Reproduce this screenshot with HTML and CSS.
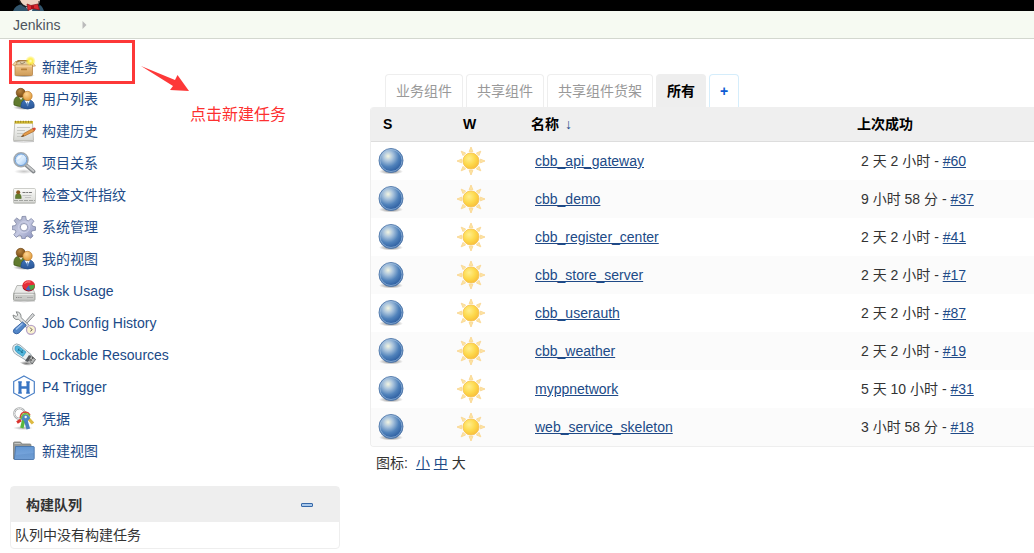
FILE: index.html
```html
<!DOCTYPE html>
<html lang="zh-CN">
<head>
<meta charset="utf-8">
<title>Jenkins</title>
<link rel="stylesheet" href="styles.css">
</head>
<body>
<svg class="sprite" aria-hidden="true">
  <defs>
    <radialGradient id="g-ball" cx=".38" cy=".32" r=".68"><stop offset="0" stop-color="#f3f5e2"/><stop offset=".3" stop-color="#a9c3dc"/><stop offset=".65" stop-color="#5082bb"/><stop offset="1" stop-color="#2b5c9f"/></radialGradient>
    <radialGradient id="g-sun" cx=".38" cy=".35" r=".7"><stop offset="0" stop-color="#ffee8c"/><stop offset=".55" stop-color="#fdd94c"/><stop offset="1" stop-color="#f8bd38"/></radialGradient>
    <radialGradient id="g-shadow"><stop offset="0" stop-color="#000" stop-opacity=".55"/><stop offset="1" stop-color="#000" stop-opacity="0"/></radialGradient>
    <radialGradient id="g-glow"><stop offset="0" stop-color="#fffbd0"/><stop offset=".4" stop-color="#fff04a"/><stop offset="1" stop-color="#ffe820" stop-opacity="0"/></radialGradient>
    <radialGradient id="g-brown" cx=".4" cy=".3" r=".8"><stop offset="0" stop-color="#b98540"/><stop offset="1" stop-color="#6b410d"/></radialGradient>
    <radialGradient id="g-gold" cx=".4" cy=".3" r=".8"><stop offset="0" stop-color="#ffd795"/><stop offset="1" stop-color="#d9902c"/></radialGradient>
    <linearGradient id="g-blue" x2="0" y2="1"><stop offset="0" stop-color="#3f74b8"/><stop offset="1" stop-color="#2a5596"/></linearGradient>
    <linearGradient id="g-box" x2="0" y2="1"><stop offset="0" stop-color="#edc488"/><stop offset="1" stop-color="#cf9c58"/></linearGradient>
    <linearGradient id="g-paper" x2="0" y2="1"><stop offset="0" stop-color="#fdfdfb"/><stop offset="1" stop-color="#d5d6d2"/></linearGradient>
    <linearGradient id="g-folder" x2="0" y2="1"><stop offset="0" stop-color="#6497d2"/><stop offset="1" stop-color="#80ace0"/></linearGradient>
    <linearGradient id="g-lens" x2="1" y2="1"><stop offset="0" stop-color="#9fc8f4"/><stop offset=".5" stop-color="#ddeefe"/><stop offset="1" stop-color="#8dbcf0"/></linearGradient>
    <linearGradient id="g-gear" x2="1" y2="1"><stop offset="0" stop-color="#a1a6bf"/><stop offset=".5" stop-color="#c5c9e2"/><stop offset="1" stop-color="#828bb8"/></linearGradient>
  </defs>
  <symbol id="i-box" viewBox="0 0 24 24">
    <ellipse cx="12" cy="20.500" rx="11" ry="2" fill="url(#g-shadow)"/>
    <path d="M4 6.500 6 5h12l1.500 1.500v4H4z" fill="#a87a40"/><path d="M5 7.500c4-2 9-1.500 13 0v3H5z" fill="#dccba9"/><path d="M8 7.500l2 1.500 3-2" fill="none" stroke="#8d7350" stroke-width=".8"/>
    <path d="M4 6 .5 10l3 1L5 9zM19.500 6l4 5-3.500.5-1.500-3z" fill="#f1d3a3" stroke="#c18c4b" stroke-width=".6"/>
    <path d="M3 10h17.500V19.500q0 1-1 1H4q-1 0-1-1z" fill="url(#g-box)" stroke="#b78445" stroke-width=".8"/>
    <path d="M3.500 11H20" stroke="#f9e0b8"/><rect x="9" y="13.500" width="6" height="1.800" rx=".5" fill="#b57d36"/>
    <circle cx="18.500" cy="6" r="5.200" fill="url(#g-glow)"/>
  </symbol>
  <symbol id="i-users" viewBox="0 0 24 24">
    <ellipse cx="12" cy="20.500" rx="11" ry="2.500" fill="url(#g-shadow)"/>
    <path d="M2 18q-1-7 3.500-8.500h6Q15 11 14 18q-6 3-12 0z" fill="#617b2e" stroke="#3f571a" stroke-width=".7"/>
    <path d="M6.500 9.500 9 13l2-3z" fill="#edf1d8"/>
    <circle cx="8.700" cy="5.800" r="4.500" fill="url(#g-brown)" stroke="#663d0b" stroke-width=".6"/>
    <path d="M9 20.500q-.5-6.500 4-7.500h4.500q5.500 1 4.500 7.500-6 3-13 0z" fill="url(#g-blue)" stroke="#214b87" stroke-width=".7"/>
    <path d="m12.500 13.500 3.200 4.500 2.300-4.500z" fill="#f6f7fb"/><path d="m15.200 15-.6 3 1 1.500 1-1.500-.7-3z" fill="#6c92c8"/>
    <circle cx="15.500" cy="9" r="4.700" fill="url(#g-gold)" stroke="#b77222" stroke-width=".6"/>
  </symbol>
  <symbol id="i-note" viewBox="0 0 24 24">
    <path d="M1.500 22.500q10 1 20.500 0" stroke="#c2c2c2" fill="none"/>
    <path d="M2.800 4H20.500L21.500 21.500h-20z" fill="url(#g-paper)" stroke="#b2b3ac" stroke-width=".8"/>
    <path d="M2.500 2h18.500v2.600H2.500z" fill="#d5bd35"/><path d="M3 2.700h18" stroke="#99831f" stroke-width="2" stroke-dasharray="1 1.600"/>
    <path d="M5 8.500h13M5 11.500h8M5 14.500h6M5 17.500h7" stroke="#c2c4bf" stroke-width=".9"/>
    <path d="m9.500 17.500 2.300-3L21 9.300l2 1-.8 1.900-9.500 4.700z" fill="#e59b48" stroke="#9c6227" stroke-width=".6"/>
    <path d="m20.200 9.600 2-1q1.800.2 1.600 1.700l-2 1.500z" fill="#d64f38"/><path d="m8.800 18 2.700-1.800.7.800z" fill="#302820"/>
  </symbol>
  <symbol id="i-search" viewBox="0 0 24 24">
    <ellipse cx="12" cy="20.500" rx="10" ry="2.500" fill="url(#g-shadow)" opacity=".4"/>
    <path d="m14.500 14.500 7 6" stroke="#85898c" stroke-width="3.800" stroke-linecap="round"/><path d="m15 14.500 6.500 5.500" stroke="#c7c9ca" stroke-width="1.800" stroke-linecap="round"/>
    <circle cx="9" cy="8.700" r="7" fill="url(#g-lens)" stroke="#a3a9ae" stroke-width="1.500"/><circle cx="9" cy="8.700" r="5.800" fill="none" stroke="#5b91cf" stroke-width=".8"/>
    <path d="M4.500 9Q5 4.500 10 4q-1 3.500-5.500 5z" fill="#fff" opacity=".75"/>
  </symbol>
  <symbol id="i-card" viewBox="0 0 24 24">
    <rect x="1.500" y="5.500" width="22" height="15" rx="1.200" fill="url(#g-paper)" stroke="#c0c2bd" stroke-width=".8"/>
    <path d="M2 17.500h21" stroke="#a2a4a0" stroke-dasharray="4 1"/><path d="M2 19.500h21" stroke="#c2c3bf"/>
    <path d="M3.500 15.500q-.5-5 2.700-5t3 5z" fill="#637e2e" stroke="#455e1c" stroke-width=".5"/><circle cx="6.200" cy="9.300" r="2" fill="#8e5b1f"/>
    <path d="M10.500 9.500H20" stroke="#777" stroke-dasharray="3 .7 2 .7"/><path d="M10.500 12.500h9M13 14.500h6" stroke="#bbb" stroke-width=".8"/>
  </symbol>
  <symbol id="i-gear" viewBox="0 0 24 24">
    <ellipse cx="12" cy="21" rx="10" ry="2" fill="url(#g-shadow)" opacity=".5"/>
    <path fill-rule="evenodd" d="m10 1.500 3.700-.2.600 3.700 2 .8 3-2.300 2.600 2.700-2.200 3 .8 2 3 .6v3.500l-3.600.6-.8 2 2 3-2.500 2.300-3-2.200-2 .8-.6 2.200H10l-.7-3-2-.8-3 2.200-2.500-2.700L4 17l-.8-2-3-.5V11l3.300-.5.800-2-2.200-3 2.600-2.500 3 2.200 2-.8zM12 8.500a3.700 3.700 0 1 0 0 7.400 3.700 3.700 0 0 0 0-7.400z" fill="url(#g-gear)" stroke="#7f86a4" stroke-width=".8" stroke-linejoin="round"/>
    <circle cx="12" cy="12.200" r="5.500" fill="none" stroke="#d0d4ea" stroke-width=".8"/>
  </symbol>
  <symbol id="i-disk" viewBox="0 0 24 24">
    <path d="M1 22q11 1.500 22 0" fill="none" stroke="#ccc"/>
    <path d="M5 6.500h14.500L23 14.500H1.500z" fill="#e9eae8" stroke="#aaaba7" stroke-width=".8"/><rect x="1.500" y="14.300" width="21.500" height="7" rx="1" fill="#c9cac7" stroke="#92948f" stroke-width=".8"/>
    <path d="M3 15.200h18.500" stroke="#f5f5f4"/><path d="M4 18.500h6" stroke="#888" stroke-dasharray="1 .8"/><path d="M15 18.500h6" stroke="#aaa"/>
    <ellipse cx="16.700" cy="7.500" rx="6.200" ry="5" fill="#9d1624"/><ellipse cx="16.700" cy="6.300" rx="6.200" ry="5" fill="#e52d38"/>
    <path d="m16.700 6.500 6-.7q.5 4-4 5.500z" fill="#49a943"/><path d="m16.700 6.500 2 4.800q-3 .7-5-1z" fill="#4265ba"/><path d="M12.500 4.500q2-2.500 6-1.500" stroke="#ff8c83" fill="none"/>
  </symbol>
  <symbol id="i-tools" viewBox="0 0 24 24">
    <path d="m13 11 7.500-8.500 2 1.600-7.800 8.500z" fill="#d8dadb" stroke="#73777b" stroke-width=".8"/>
    <path d="M4.200.8 5.700 4 4.300 5.500 1 4Q1 7.500 4 8.500l2.700-.2L19 21.500l3-2.500L9 6.500Q9.500 1 4.200.8z" fill="#e2e4e3" stroke="#7e8282" stroke-width=".9"/>
    <path d="m10.500 11 3.700 3.200-7.500 8q-2.700 1.300-4.500-.2t0-4z" fill="#5387c8" stroke="#2d599b" stroke-width=".9"/><path d="m4 18.500 6.500-6" stroke="#9fc2ee" stroke-width="1.500"/>
    <circle cx="19" cy="18.800" r="4.500" fill="#faf3cf" stroke="#b9a5c8" stroke-width="1.300"/><path d="m18 16.500 2.200 2.300-1.900 1.500" fill="none" stroke="#6c615b"/>
  </symbol>
  <symbol id="i-usb" viewBox="0 0 24 24">
    <path d="M6 18q9 7 17 4l-4-4z" fill="url(#g-shadow)"/>
    <path d="m15 15 3-3.500 5.500 5-3.300 4.500z" fill="#b4b6b5" stroke="#505356" stroke-width=".8"/><path d="m18.500 16.500 1 1m.7-3 1 1" stroke="#333" stroke-width="1.300"/>
    <path d="M1.500 2.500Q4-.5 8 2l11 9.500-4.500 6L3.500 11Q-1 7 1.500 2.500z" fill="#e7eef0" stroke="#93a1a9" stroke-width=".9"/>
    <path d="M3.200 3.700Q5 1.500 8 4l6 5-3 4.500L5 9.500q-3-2.500-1.800-5.800z" fill="#52b6dc" stroke="#278ab5" stroke-width=".6"/><path d="m6 6 5 4m-4-4.500-1 2.500m4.500-1-1 3" stroke="#176987" stroke-width=".8"/>
    <path d="m13 18 4-6 2.200 1.500-3 5.500z" fill="#55595d"/>
  </symbol>
  <symbol id="i-hex" viewBox="0 0 24 24">
    <path d="m12 1 10.300 5.500v11.500L12 23.500 1.700 18V6.500z" fill="#fff" stroke="#497fc6" stroke-width="1.200"/>
    <path d="M8 6.500v12M16 6.500v12" stroke="#3975c3" stroke-width="3"/><path d="M8 12.500h8" stroke="#3975c3" stroke-width="2.500"/><path d="M6 7h4m4 0h4M6 18h4m4 0h4" stroke="#3975c3"/>
  </symbol>
  <symbol id="i-keys" viewBox="0 0 24 24">
    <ellipse cx="11" cy="21" rx="10" ry="2" fill="url(#g-shadow)" opacity=".6"/>
    <circle cx="7.500" cy="6.500" r="5.300" fill="none" stroke="#9b9e9f" stroke-width="2"/><circle cx="7.500" cy="6.500" r="5.300" fill="none" stroke="#f0f2f2" stroke-width=".9"/>
    <path d="m15 10 6 6.500" stroke="#ddba42" stroke-width="3.300"/><path d="m9 13-4 2.500" stroke="#d9332e" stroke-width="3"/><path d="m12 12-2.200 9" stroke="#58b83d" stroke-width="3.400"/><path d="m13 11 3.300 11" stroke="#477fbd" stroke-width="3.700"/>
    <path d="M8.500 12q1.500-6 6.500-4.500 3 .8 3 4L14.500 15z" fill="#4c88c2"/><path d="M8.200 11Q8.500 5 13.500 5q3 .3 4.500 3" fill="none" stroke="#d94337" stroke-width="1.500"/><path d="M9 12q1-5.500 5-5.500 3 .5 4 3" fill="none" stroke="#74bd3b" stroke-width="1.500"/><circle cx="13.700" cy="10" r="1.200" fill="#eef5f7"/>
  </symbol>
  <symbol id="i-folder" viewBox="0 0 24 24">
    <path d="M1.500 20V4q0-1 1-1h6l1.500 2h8q1 0 1 1v14z" fill="#979996" stroke="#7c7e7b" stroke-width=".8"/><path d="M2.500 4.500h6" stroke="#c6c7c4"/>
    <path d="M3.500 7.500h18q.7 0 .7.700V19.500q0 1-1 1H2.500z" fill="url(#g-folder)" stroke="#4775ad" stroke-width=".9"/><path d="m3.500 16 18.500-2v6H3.500z" fill="#4c7eb9" opacity=".3"/>
  </symbol>
  <symbol id="i-ball" viewBox="0 0 26 26">
    <ellipse cx="13" cy="23.500" rx="12" ry="3" fill="url(#g-shadow)"/>
    <circle cx="13" cy="12.500" r="12" fill="url(#g-ball)" stroke="#5279aa" stroke-width=".9"/><circle cx="13" cy="12.500" r="11" fill="none" stroke="#a9c5e3" stroke-width=".9" opacity=".7"/>
  </symbol>
  <symbol id="i-sun" viewBox="0 0 30 30">
    <path d="m13 5 2-5 2 5zm0 20 2 5 2-5zM5 13l-5 2 5 2zm20 0 5 2-5 2zM9.200 6.500 4.500 4.500l2 4.700zm11.600 0 4.700-2-2 4.700zM9.200 23.500l-4.700 2 2-4.700zm11.600 0 4.700 2-2-4.700z" fill="#fde5a0" stroke="#fad795" stroke-width="1"/>
    <circle cx="15" cy="15" r="8.600" fill="url(#g-sun)" stroke="#f7c250" stroke-width=".9"/>
  </symbol>
</svg>

<header class="topbar">
  <svg class="mascot" viewBox="0 0 36 11" aria-hidden="true">
    <path d="M1 11Q3 5 11 4h15q4 1 6 7z" fill="#31546b"/><path d="M8 0q1 5 9 7h5q6-2 6-7z" fill="#efd4c3"/><path d="M7 0q2 6 10 8" fill="none" stroke="#1c1c1c" stroke-width="1.200"/>
    <path d="M14 7h7l-1 4h-3z" fill="#e9edf0"/><path d="m15 4 4 1.500L26 4l1.500 6-6.500-1.500-5 2z" fill="#dc2a30" stroke="#7c1116" stroke-width=".7"/><path d="M19 5.500h3v3.500h-3z" fill="#a51119"/>
    <path d="M27 1v5" stroke="#222"/>
  </svg>
</header>
<nav class="crumbs" aria-label="Breadcrumb">
  <a href="#">Jenkins</a>
  <svg class="crumb-arrow" viewBox="0 0 5 8" aria-hidden="true"><path d="M.5 0v8l4-4z" fill="#bbb"/></svg>
</nav>

<div class="page">
  <aside class="side">
    <ul class="tasks">
      <li><a href="#"><svg><use href="#i-box"/></svg>新建任务</a></li>
      <li><a href="#"><svg><use href="#i-users"/></svg>用户列表</a></li>
      <li><a href="#"><svg><use href="#i-note"/></svg>构建历史</a></li>
      <li><a href="#"><svg><use href="#i-search"/></svg>项目关系</a></li>
      <li><a href="#"><svg><use href="#i-card"/></svg>检查文件指纹</a></li>
      <li><a href="#"><svg><use href="#i-gear"/></svg>系统管理</a></li>
      <li><a href="#"><svg><use href="#i-users"/></svg>我的视图</a></li>
      <li><a href="#"><svg><use href="#i-disk"/></svg>Disk Usage</a></li>
      <li><a href="#"><svg><use href="#i-tools"/></svg>Job Config History</a></li>
      <li><a href="#"><svg><use href="#i-usb"/></svg>Lockable Resources</a></li>
      <li><a href="#"><svg><use href="#i-hex"/></svg>P4 Trigger</a></li>
      <li><a href="#"><svg><use href="#i-keys"/></svg>凭据</a></li>
      <li><a href="#"><svg><use href="#i-folder"/></svg>新建视图</a></li>
    </ul>
    <section class="queue">
      <div class="queue-head">
        <h2>构建队列</h2>
        <button type="button" class="collapse" aria-label="收起"></button>
      </div>
      <p>队列中没有构建任务</p>
    </section>
    <div class="highlight"></div>
    <svg class="pointer" viewBox="0 0 48 28" aria-hidden="true"><path d="M0 0 34 14l2.500-5L48 25l-19-1 3-4z" fill="#fd3838"/></svg>
    <span class="hint">点击新建任务</span>
  </aside>

  <main class="content">
    <nav class="tabs" aria-label="视图">
      <a class="tab" href="#">业务组件</a>
      <a class="tab" href="#">共享组件</a>
      <a class="tab" href="#">共享组件货架</a>
      <a class="tab active" href="#">所有</a>
      <a class="tab add" href="#">+</a>
    </nav>
    <div class="jobs-frame">
      <table class="jobs">
        <colgroup><col class="c-status"><col class="c-weather"><col class="c-name"><col></colgroup>
        <thead>
          <tr><th class="short">S</th><th class="short">W</th><th>名称 <span class="sort">↓</span></th><th>上次成功</th></tr>
        </thead>
        <tbody>
          <tr><td class="icon"><svg class="ball"><use href="#i-ball"/></svg></td><td class="icon"><svg class="sun"><use href="#i-sun"/></svg></td><td><a href="#">cbb_api_gateway</a></td><td>2 天 2 小时 - <a href="#">#60</a></td></tr>
          <tr><td class="icon"><svg class="ball"><use href="#i-ball"/></svg></td><td class="icon"><svg class="sun"><use href="#i-sun"/></svg></td><td><a href="#">cbb_demo</a></td><td>9 小时 58 分 - <a href="#">#37</a></td></tr>
          <tr><td class="icon"><svg class="ball"><use href="#i-ball"/></svg></td><td class="icon"><svg class="sun"><use href="#i-sun"/></svg></td><td><a href="#">cbb_register_center</a></td><td>2 天 2 小时 - <a href="#">#41</a></td></tr>
          <tr><td class="icon"><svg class="ball"><use href="#i-ball"/></svg></td><td class="icon"><svg class="sun"><use href="#i-sun"/></svg></td><td><a href="#">cbb_store_server</a></td><td>2 天 2 小时 - <a href="#">#17</a></td></tr>
          <tr><td class="icon"><svg class="ball"><use href="#i-ball"/></svg></td><td class="icon"><svg class="sun"><use href="#i-sun"/></svg></td><td><a href="#">cbb_userauth</a></td><td>2 天 2 小时 - <a href="#">#87</a></td></tr>
          <tr><td class="icon"><svg class="ball"><use href="#i-ball"/></svg></td><td class="icon"><svg class="sun"><use href="#i-sun"/></svg></td><td><a href="#">cbb_weather</a></td><td>2 天 2 小时 - <a href="#">#19</a></td></tr>
          <tr><td class="icon"><svg class="ball"><use href="#i-ball"/></svg></td><td class="icon"><svg class="sun"><use href="#i-sun"/></svg></td><td><a href="#">myppnetwork</a></td><td>5 天 10 小时 - <a href="#">#31</a></td></tr>
          <tr><td class="icon"><svg class="ball"><use href="#i-ball"/></svg></td><td class="icon"><svg class="sun"><use href="#i-sun"/></svg></td><td><a href="#">web_service_skeleton</a></td><td>3 小时 58 分 - <a href="#">#18</a></td></tr>
        </tbody>
      </table>
    </div>
    <p class="sizes"><span class="sizes-label">图标:</span><a href="#">小</a> <a href="#">中</a> 大</p>
  </main>
</div>
</body>
</html>
```
FILE: styles.css
```css
* {
  box-sizing: border-box;
}

body {
  margin: 0;
  background: #fff;
  color: #333;
  font-family: "Liberation Sans", "Noto Sans CJK SC", sans-serif;
  font-size: 14px;
  line-height: 20px;
}

a {
  color: #204a87;
}

.sprite {
  position: absolute;
  width: 0;
  height: 0;
}

.topbar {
  height: 11px;
  padding-left: 12px;
  background: #000;
}

.mascot {
  display: block;
  width: 36px;
  height: 11px;
}

.crumbs {
  display: flex;
  align-items: center;
  gap: 22px;
  height: 28px;
  padding-left: 13px;
  border-bottom: 1px solid #d3d7cf;
  background: #f6faf2;
}

.crumbs a {
  color: #4d545d;
  text-decoration: none;
}

.crumb-arrow {
  width: 5px;
  height: 8px;
}

.page {
  display: flex;
  gap: 30px;
}

.side {
  position: relative;
  flex: none;
  width: 340px;
  padding: 12px 0 4px 10px;
}

.tasks {
  margin: 0 0 19px;
  padding: 0 0 0 2px;
  list-style: none;
}

.tasks a {
  display: flex;
  align-items: center;
  gap: 6px;
  height: 32px;
  text-decoration: none;
}

.tasks svg {
  width: 24px;
  height: 24px;
}

.queue {
  border: 1px solid #eee;
  border-radius: 4px;
}

.queue-head {
  display: flex;
  align-items: center;
  justify-content: space-between;
  height: 35px;
  padding: 0 26px 0 15px;
  background: #eee;
}

.queue h2 {
  margin: 0;
  font-size: 14px;
}

.queue p {
  margin: 0;
  padding: 3px 4px;
}

.collapse {
  width: 12px;
  height: 4px;
  padding: 0;
  border: 1px solid #3668a8;
  border-radius: 1px;
  background: #a9c8ea;
}

.highlight {
  position: absolute;
  top: 1px;
  left: 9px;
  width: 126px;
  height: 44px;
  border: 3px solid #fd3838;
}

.pointer {
  position: absolute;
  top: 27px;
  left: 141px;
  width: 48px;
  height: 28px;
}

.hint {
  position: absolute;
  top: 66px;
  left: 190px;
  color: #fd3030;
  font-size: 16px;
}

.content {
  flex: 1;
  min-width: 0;
  padding-top: 35px;
}

.tabs {
  display: flex;
  gap: 3px;
  padding-left: 15px;
}

.tab {
  height: 33px;
  padding: 6px 10px;
  border: 1px solid #eee;
  border-bottom: 0;
  border-radius: 4px 4px 0 0;
  color: #999;
  text-decoration: none;
  white-space: nowrap;
}

.tab.active {
  border-color: #eee;
  background: #eee;
  color: #000;
  font-weight: bold;
}

.tab.add {
  border-color: #d5edfb;
  color: #0b5bd3;
  font-weight: bold;
}

.jobs-frame {
  overflow: hidden;
  border: 1px solid #eee;
  border-width: 0 0 1px 1px;
  border-radius: 4px 0 0 4px;
}

.jobs {
  width: 100%;
  border-spacing: 0;
  table-layout: fixed;
}

.c-status {
  width: 80px;
}

.c-weather {
  width: 76px;
}

.c-name {
  width: 326px;
}

.jobs th {
  height: 35px;
  padding: 0 4px;
  border-bottom: 1px solid #ddd;
  background: #efefef;
  color: #000;
  text-align: left;
}

.jobs th.short {
  padding-left: 12px;
}

.sort {
  margin-left: 2px;
  color: #204a87;
  font-weight: normal;
}

.jobs td {
  height: 38px;
  padding: 0 8px;
}

.jobs td.icon {
  padding: 0 6px;
}

.jobs tbody tr:nth-child(even) {
  background: #fbfbfb;
}

.ball,
.sun {
  display: block;
}

.ball {
  width: 28px;
  height: 26px;
}

.sun {
  width: 28px;
  height: 28px;
}

.sizes {
  margin: 0;
  padding: 6px;
}

.sizes-label {
  margin-right: 8px;
}
```
